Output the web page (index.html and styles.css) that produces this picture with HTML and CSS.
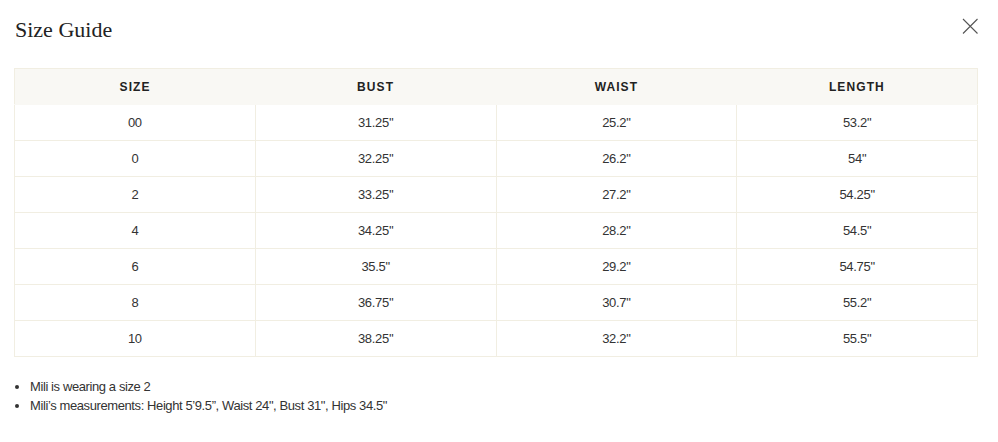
FILE: index.html
```html
<!DOCTYPE html>
<html>
<head>
<meta charset="utf-8">
<link rel="stylesheet" href="styles.css">
</head>
<body>
<div class="modal">
  <div class="modal-head">
    <h2 class="title">Size Guide</h2>
    <button class="close" aria-label="Close">
      <svg width="16" height="16" viewBox="0 0 16 16"><path d="M1 1 L15.5 15.5 M15.5 1 L1 15.5" stroke="#555" stroke-width="1.1" fill="none"/></svg>
    </button>
  </div>
  <table class="size-table">
    <thead>
      <tr><th>SIZE</th><th>BUST</th><th>WAIST</th><th>LENGTH</th></tr>
    </thead>
    <tbody>
      <tr><td>00</td><td>31.25''</td><td>25.2"</td><td>53.2"</td></tr>
      <tr><td>0</td><td>32.25''</td><td>26.2"</td><td>54"</td></tr>
      <tr><td>2</td><td>33.25''</td><td>27.2"</td><td>54.25"</td></tr>
      <tr><td>4</td><td>34.25''</td><td>28.2"</td><td>54.5"</td></tr>
      <tr><td>6</td><td>35.5"</td><td>29.2"</td><td>54.75"</td></tr>
      <tr><td>8</td><td>36.75''</td><td>30.7"</td><td>55.2"</td></tr>
      <tr><td>10</td><td>38.25''</td><td>32.2"</td><td>55.5"</td></tr>
    </tbody>
  </table>
  <ul class="notes">
    <li>Mili is wearing a size 2</li>
    <li>Mili’s measurements: Height 5’9.5”, Waist 24", Bust 31", Hips 34.5"</li>
  </ul>
</div>
</body>
</html>
```
FILE: styles.css
```css
html, body {
  margin: 0;
  background: #fff;
}
body {
  font-family: "Liberation Sans", Arial, sans-serif;
  color: #333;
}
.modal {
  padding: 0 20px 0 14px;
}
.modal-head {
  display: flex;
  justify-content: space-between;
  align-items: flex-start;
  height: 68px;
}
.title {
  margin: 17px 0 0 1px;
  font-family: "Liberation Serif", "Times New Roman", serif;
  font-weight: 400;
  font-size: 22px;
  line-height: 26px;
  color: #222;
}
.close {
  margin: 18px 0 0 0;
  padding: 0;
  border: 0;
  background: none;
  width: 16px;
  height: 16px;
  display: block;
}
.close svg { display: block; }
.size-table {
  width: 964px;
  border-collapse: collapse;
  table-layout: fixed;
  border: 1px solid #f1eee2;
}
.size-table th {
  background: #f9f8f4;
  height: 35px;
  padding: 0;
  border-bottom: 1px solid #f9f8f4;
  font-size: 12px;
  font-weight: 600;
  letter-spacing: 1.1px;
  color: #222;
  text-align: center;
}
.size-table td {
  height: 35px;
  padding: 0;
  border: 1px solid #f1eee2;
  font-size: 13px;
  letter-spacing: -0.3px;
  color: #333;
  text-align: center;
}
.notes {
  margin: 20px 0 0 0;
  padding: 0 0 0 16px;
  font-size: 13px;
  line-height: 19px;
  letter-spacing: -0.4px;
  color: #333;
}
```
